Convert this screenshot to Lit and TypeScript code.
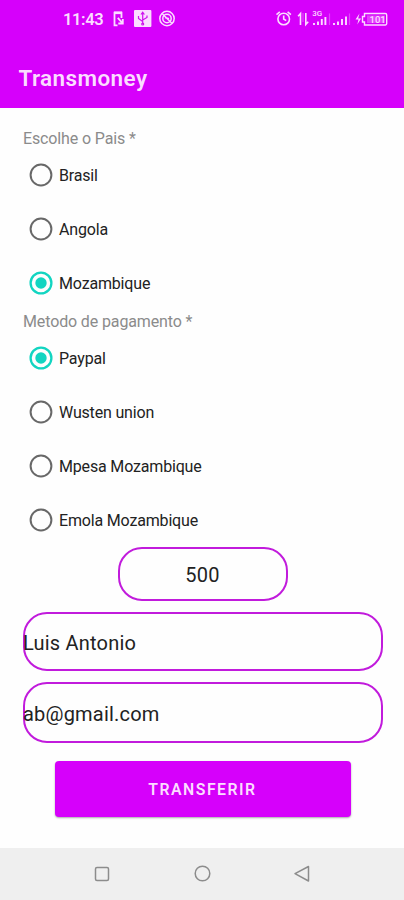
import { LitElement, html, css, svg } from "lit";
import { customElement, property } from "lit/decorators.js";
import { classMap } from "lit/directives/class-map.js";

@customElement("status-bar")
class StatusBar extends LitElement {
  static styles = css`
    :host { display: flex; height: 38px; align-items: center; padding-left: 63px; color: #fbdcff; }
    .time { font-size: 16.5px; font-weight: 600; width: 50px; letter-spacing: -0.4px; line-height: 38px; padding-top: 1px; }
    svg { display: block; height: 38px; }
    .left { width: 64px; }
    .right { width: 116px; margin-left: 97px; }
    text { font-family: Roboto, sans-serif; fill: #fbdcff; }
  `;
  render() {
    return html`
      <span class="time">11:43</span>
      <svg class="left" viewBox="113 0 64 38" fill="none" stroke="#fbdcff" stroke-width="1.8">
        <path d="M117.5 25.3h-3V12.7h7v5.3" />
        <path d="M114 12.8h8" stroke-width="2.6" />
        <path d="M117.8 17.8l4 4.5m1-3.3v4.5h-4.5" />
        <rect x="134" y="10" width="17.4" height="17" rx="1" fill="#fbdcff" stroke="none" />
        <g stroke="#cf12ee" stroke-width="1.2">
          <path d="M142.7 24V13M138.5 16v2.5l4.2 3M147 15.5v2l-4.3 2.5M141 14.5l1.7-2.3 1.7 2.3" />
          <circle cx="142.7" cy="24" r="1" />
        </g>
        <circle cx="167" cy="18.5" r="7.2" stroke-width="1.5" />
        <circle cx="167" cy="18.5" r="4.2" stroke-width="1.5" />
        <path d="M162.3 13.8l9.5 9.5M165 17.5l4 1.3" stroke-width="1.5" />
      </svg>
      <svg class="right" viewBox="274 0 116 38" fill="none" stroke="#fbdcff" stroke-width="1.6">
        <circle cx="283.7" cy="19" r="5.8" />
        <path d="M283.7 15.5V19l2.5 1.6M276.5 14.7l3.3-2.8M290.9 14.7l-3.3-2.8" />
        <path d="M300.5 25V13.5l-2.4 2.7M305.8 13v11.5l2.4-2.7" />
        <path d="M303 13v9" stroke-width="1" opacity="0.4" />
        <text x="312.2" y="16.4" font-size="8" font-weight="500" stroke="none">3G</text>
        <path d="M314 23v2M318 21.5V25M321.8 19v6M325.4 17v8" stroke-width="1.9" />
        <path d="M329.5 13.5V25M349.5 13.5V25" stroke-width="1.2" opacity="0.3" />
        <path d="M334 23v2M338 21.5V25M342 19v6M346 16.5V25" stroke-width="1.9" />
        <path d="M359.5 13.5l-4 6h3l-1.2 5 3.8-6h-3z" fill="#fbdcff" stroke="none" />
        <path d="M364.5 13.5h20.7a1.5 1.5 0 0 1 1.5 1.5v8.5a1.5 1.5 0 0 1-1.5 1.5h-20.7v-3h-2v-5.5h2z" stroke-width="1.4" />
        <rect x="367" y="15.5" width="18" height="7.5" fill="#fbdcff" opacity="0.3" stroke="none" />
        <text x="369.5" y="22.8" font-size="9.5" font-weight="500" stroke="none">101</text>
      </svg>
    `;
  }
}

@customElement("radio-option")
class RadioOption extends LitElement {
  @property() label = "";
  @property({ type: Boolean }) checked = false;
  static styles = css`
    :host { display: flex; align-items: center; height: 54px; padding-left: 29px; }
    svg { width: 24px; height: 24px; margin-right: 6px; fill: none; stroke: #686868; stroke-width: 2; }
    .on { stroke: #12d5c1; stroke-width: 2.3; }
    .on .dot { fill: #12d5c1; stroke: none; }
    span { font-size: 16px; letter-spacing: -0.17px; color: #222; padding-top: 1px; }
  `;
  render() {
    return html`<svg class=${classMap({ on: this.checked })} viewBox="0 0 24 24">
        <circle cx="12" cy="12" r="10.4" />
        ${this.checked ? svg`<circle class="dot" cx="12" cy="12" r="5.7" />` : ""}
      </svg><span>${this.label}</span>`;
  }
}

@customElement("app-root")
class AppRoot extends LitElement {
  static styles = css`
    :host { display: flex; flex-direction: column; height: 900px; background: #fefefe; font-family: Roboto, sans-serif; color: #222; overflow: hidden; }
    header { height: 108px; background: #d600fb; flex: none; }
    h1 { margin: 0; padding: 24px 0 0 18.5px; font-size: 22.5px; line-height: 32px; font-weight: 600; color: #fbdcff; letter-spacing: 0.4px; }
    main { flex: 1; display: flex; flex-direction: column; }
    .label { padding-left: 23px; font-size: 16px; line-height: 21px; letter-spacing: -0.13px; color: #8b8b8b; flex: none; }
    .country { margin-top: 20px; height: 20px; }
    .method { height: 21px; line-height: 23px; }
    .field { box-sizing: border-box; border: 2px solid #c11bdc; border-radius: 24px; display: flex; align-items: center; font-size: 20px; letter-spacing: 0.2px; flex: none; }
    .field span { margin-left: -1.5px; padding-top: 2px; }
    .amount { width: 170px; height: 54px; margin: 0 0 11px 117.5px; justify-content: center; }
    .amount span { margin-left: 0; }
    .name { width: 360px; height: 59px; margin: 0 0 11px 22.5px; }
    .mail { width: 360px; height: 61px; margin: 0 0 18px 22.5px; }
    button { width: 296px; height: 56px; margin: 0 0 0 54.5px; border: 0; border-radius: 4px; background: #d600fb; color: #fbdcff; font: 600 15.8px Roboto, sans-serif; letter-spacing: 1.5px; padding: 1px 0 0; box-shadow: 0 1px 2px #0005; }
    nav { height: 52px; background: #efefef; flex: none; display: flex; justify-content: space-between; align-items: center; padding: 0 92px; }
    nav svg { width: 20px; height: 20px; fill: none; stroke: #8c8c8c; stroke-width: 1.5; }
  `;
  render() {
    return html`
      <header>
        <status-bar></status-bar>
        <h1>Transmoney</h1>
      </header>
      <main>
        <div class="label country">Escolhe o Pais *</div>
        <radio-option label="Brasil"></radio-option>
        <radio-option label="Angola"></radio-option>
        <radio-option label="Mozambique" checked></radio-option>
        <div class="label method">Metodo de pagamento *</div>
        <radio-option label="Paypal" checked></radio-option>
        <radio-option label="Wusten union"></radio-option>
        <radio-option label="Mpesa Mozambique"></radio-option>
        <radio-option label="Emola Mozambique"></radio-option>
        <div class="field amount"><span>500</span></div>
        <div class="field name"><span>Luis Antonio</span></div>
        <div class="field mail"><span>ab@gmail.com</span></div>
        <button>TRANSFERIR</button>
      </main>
      <nav>
        <svg viewBox="0 0 20 20"><rect x="3.5" y="3.5" width="13" height="13" rx="1.5" /></svg>
        <svg viewBox="0 0 20 20"><circle cx="10.5" cy="9.5" r="7.3" /></svg>
        <svg viewBox="0 0 20 20"><path d="M16.5 2.5v14.5L3 9.7z" stroke-linejoin="round" /></svg>
      </nav>
    `;
  }
}
